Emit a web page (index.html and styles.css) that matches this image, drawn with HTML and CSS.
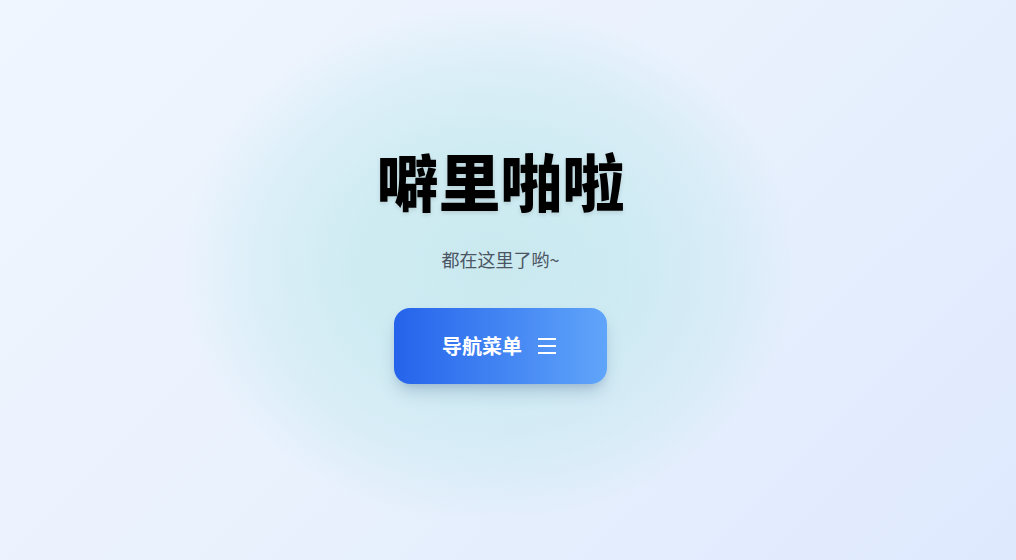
FILE: index.html
```html
<!DOCTYPE html>
<html lang="zh">
<head>
<meta charset="utf-8">
<link rel="stylesheet" href="styles.css">
</head>
<body>
<main class="page">
  <div class="glow"></div>
  <section class="hero">
    <h1 class="title">噼里啪啦</h1>
    <p class="subtitle">都在这里了哟~</p>
    <button class="nav-btn">
      <span class="nav-label">导航菜单</span>
      <svg class="nav-icon" width="24" height="24" viewBox="0 0 24 24" fill="none" stroke="currentColor" stroke-width="2" stroke-linecap="butt">
        <path d="M3 5h18M3 12h18M3 19h18"/>
      </svg>
    </button>
  </section>
</main>
</body>
</html>
```
FILE: styles.css
```css
* { box-sizing: border-box; }
html, body { margin: 0; padding: 0; height: 100%; }
body {
  font-family: "Noto Sans CJK SC", "Noto Sans", sans-serif;
  background: linear-gradient(135deg, #f0f6ff 0%, #e9f1fd 50%, #dfe9fe 100%);
  overflow: hidden;
}
.page {
  position: relative;
  height: 560px;
}
.glow {
  position: absolute;
  left: 180px;
  top: 5px;
  width: 620px;
  height: 520px;
  background: radial-gradient(closest-side, rgba(170, 225, 225, 0.5) 0%, rgba(175, 228, 230, 0.45) 45%, rgba(185, 230, 235, 0.32) 75%, rgba(195, 233, 238, 0.14) 92%, rgba(200, 235, 240, 0) 100%);
  pointer-events: none;
}
.hero {
  position: relative;
  display: flex;
  flex-direction: column;
  align-items: center;
  padding-top: 144px;
  padding-right: 15px;
}
.title {
  margin: 0;
  font-size: 62px;
  line-height: 72px;
  font-weight: 900;
  color: #000;
  text-shadow: 0 2px 4px rgba(0, 0, 0, 0.12);
  letter-spacing: 0;
}
.subtitle {
  margin: 29px 0 0;
  font-size: 18px;
  line-height: 28px;
  color: #4b5563;
}
.nav-btn {
  margin-top: 35px;
  display: flex;
  align-items: center;
  gap: 13px;
  padding: 24px 48px;
  border: 0;
  border-radius: 16px;
  background: linear-gradient(90deg, #2563eb 0%, #60a5fa 100%);
  color: #fff;
  font-family: inherit;
  box-shadow: 0 10px 18px -4px rgba(30, 64, 120, 0.25), 0 4px 8px -4px rgba(30, 64, 120, 0.15);
  cursor: pointer;
}
.nav-label {
  font-size: 20px;
  line-height: 28px;
  font-weight: 700;
}
.nav-icon { display: block; }
```
